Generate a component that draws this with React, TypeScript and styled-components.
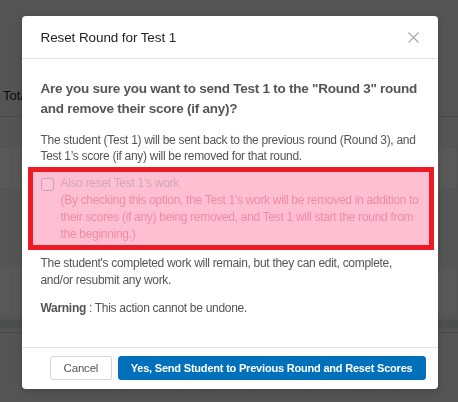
import React from "react";
import styled, { createGlobalStyle } from "styled-components";

const Global = createGlobalStyle`
  html, body { margin: 0; padding: 0; }
  body {
    width: 458px;
    height: 402px;
    overflow: hidden;
    font-family: "Liberation Sans", Arial, sans-serif;
    background: #f2f3f5;
  }
`;

const Page = styled.div`
  width: 458px;
  height: 402px;
  display: flex;
  flex-direction: column;
  background: #f2f3f5;
`;

const TableHead = styled.div`
  margin-top: 75px;
  height: 41px;
  display: flex;
  align-items: center;
  padding-left: 3px;
  font-size: 13px;
  color: #222;
  border-bottom: 1px solid #d0d2d4;
`;

const Row = styled.div<{ $top: number; $h: number }>`
  margin-top: ${(p) => p.$top}px;
  height: ${(p) => p.$h}px;
  display: grid;
  grid-template-columns: 12px 1fr;
  background: #ffffff;
`;

const Cell = styled.div`
  border-right: 1px solid #ececec;
`;

const Bar = styled.div`
  margin-top: 5px;
  height: 8px;
  background: #dfe1e3;
`;

const Line = styled.div`
  margin-top: 4px;
  height: 1px;
  background: #c9cbce;
`;

const Overlay = styled.div`
  position: fixed;
  inset: 0;
  background: rgba(0, 0, 0, 0.655);
  display: flex;
  justify-content: center;
  align-items: flex-start;
  padding-top: 16px;
  padding-left: 1px;
`;

const Modal = styled.div`
  width: 416px;
  background: #fff;
  border-radius: 4px;
  display: flex;
  flex-direction: column;
  box-shadow: 0 2px 8px rgba(0, 0, 0, 0.2);
`;

const Header = styled.div`
  height: 42px;
  display: flex;
  align-items: center;
  justify-content: space-between;
  padding: 0 18px 0 19px;
  border-bottom: 1px solid #e5e5e5;
`;

const Title = styled.div`
  font-size: 13.5px;
  letter-spacing: -0.1px;
  color: #222;
`;

const Close = styled.button`
  border: none;
  background: none;
  padding: 0;
  width: 12px;
  height: 12px;
  display: flex;
  align-items: center;
  justify-content: center;
`;

const Body = styled.div`
  padding: 20px 19px 31px 19px;
  display: flex;
  flex-direction: column;
`;

const Question = styled.div`
  font-size: 13.5px;
  font-weight: bold;
  line-height: 20px;
  letter-spacing: -0.25px;
  color: #555;
`;

const Para = styled.p<{ $top: number; $lh?: number }>`
  margin: ${(p) => p.$top}px 0 0 0;
  font-size: 12px;
  line-height: ${(p) => p.$lh ?? 16}px;
  letter-spacing: -0.3px;
  color: #555;
`;

const Highlight = styled.div`
  margin: 3px -15px 0 -13px;
  border: 5px solid #ed1c24;
  background: #ffbfd3;
  padding: 3px 8px 2px 8px;
  display: flex;
  gap: 7px;
`;

const Box = styled.span`
  flex: none;
  width: 11px;
  height: 11px;
  margin-top: 3px;
  border: 1px solid #bea3c6;
  border-radius: 3px;
  background: #ffc3d6;
`;

const LabelText = styled.div`
  font-size: 12px;
  line-height: 17px;
  letter-spacing: -0.3px;
`;

const LabelMain = styled.div`
  color: #d2a7b8;
`;

const LabelNote = styled.div`
  color: #f08ba6;
`;

const Footer = styled.div`
  border-top: 1px solid #e5e5e5;
  padding: 8px 12px 9px 0;
  display: flex;
  justify-content: flex-end;
  gap: 6px;
`;

const Button = styled.button<{ $primary?: boolean }>`
  height: 24px;
  box-sizing: border-box;
  white-space: nowrap;
  padding: 0 ${(p) => (p.$primary ? 12 : 12.5)}px;
  border-radius: 3px;
  font-family: "Liberation Sans", Arial, sans-serif;
  font-size: ${(p) => (p.$primary ? 11 : 11.5)}px;
  letter-spacing: -0.2px;
  font-weight: ${(p) => (p.$primary ? "bold" : "normal")};
  color: ${(p) => (p.$primary ? "#fff" : "#555")};
  background: ${(p) => (p.$primary ? "#0070ba" : "#fff")};
  border: 1px solid ${(p) => (p.$primary ? "#0070ba" : "#d5d5d5")};
`;

export default function App() {
  return (
    <>
      <Global />
      <Page>
        <TableHead>Total</TableHead>
        <Row $top={31} $h={40}>
          <Cell />
          <Cell />
        </Row>
        <Row $top={79} $h={48}>
          <Cell />
          <Cell />
        </Row>
        <Bar />
        <Line />
      </Page>
      <Overlay>
        <Modal>
          <Header>
            <Title>Reset Round for Test 1</Title>
            <Close aria-label="Close">
              <svg width="11" height="11" viewBox="0 0 11 11">
                <path d="M0.5 0.5 L10.5 10.5 M10.5 0.5 L0.5 10.5" stroke="#a8a8a8" strokeWidth="1.1" />
              </svg>
            </Close>
          </Header>
          <Body>
            <Question>
              Are you sure you want to send Test 1 to the "Round 3" round and remove their score (if any)?
            </Question>
            <Para $top={13}>
              The student (Test 1) will be sent back to the previous round (Round 3), and Test 1’s score (if any) will be removed for that round.
            </Para>
            <Highlight>
              <Box />
              <LabelText>
                <LabelMain>Also reset Test 1’s work</LabelMain>
                <LabelNote>
                  (By checking this option, the Test 1's work will be removed in addition to their scores (if any) being removed, and Test 1 will start the round from the beginning.)
                </LabelNote>
              </LabelText>
            </Highlight>
            <Para $top={5} $lh={17}>
              The student's completed work will remain, but they can edit, complete, and/or resubmit any work.
            </Para>
            <Para $top={11}>
              <b>Warning</b> : This action cannot be undone.
            </Para>
          </Body>
          <Footer>
            <Button>Cancel</Button>
            <Button $primary>Yes, Send Student to Previous Round and Reset Scores</Button>
          </Footer>
        </Modal>
      </Overlay>
    </>
  );
}
